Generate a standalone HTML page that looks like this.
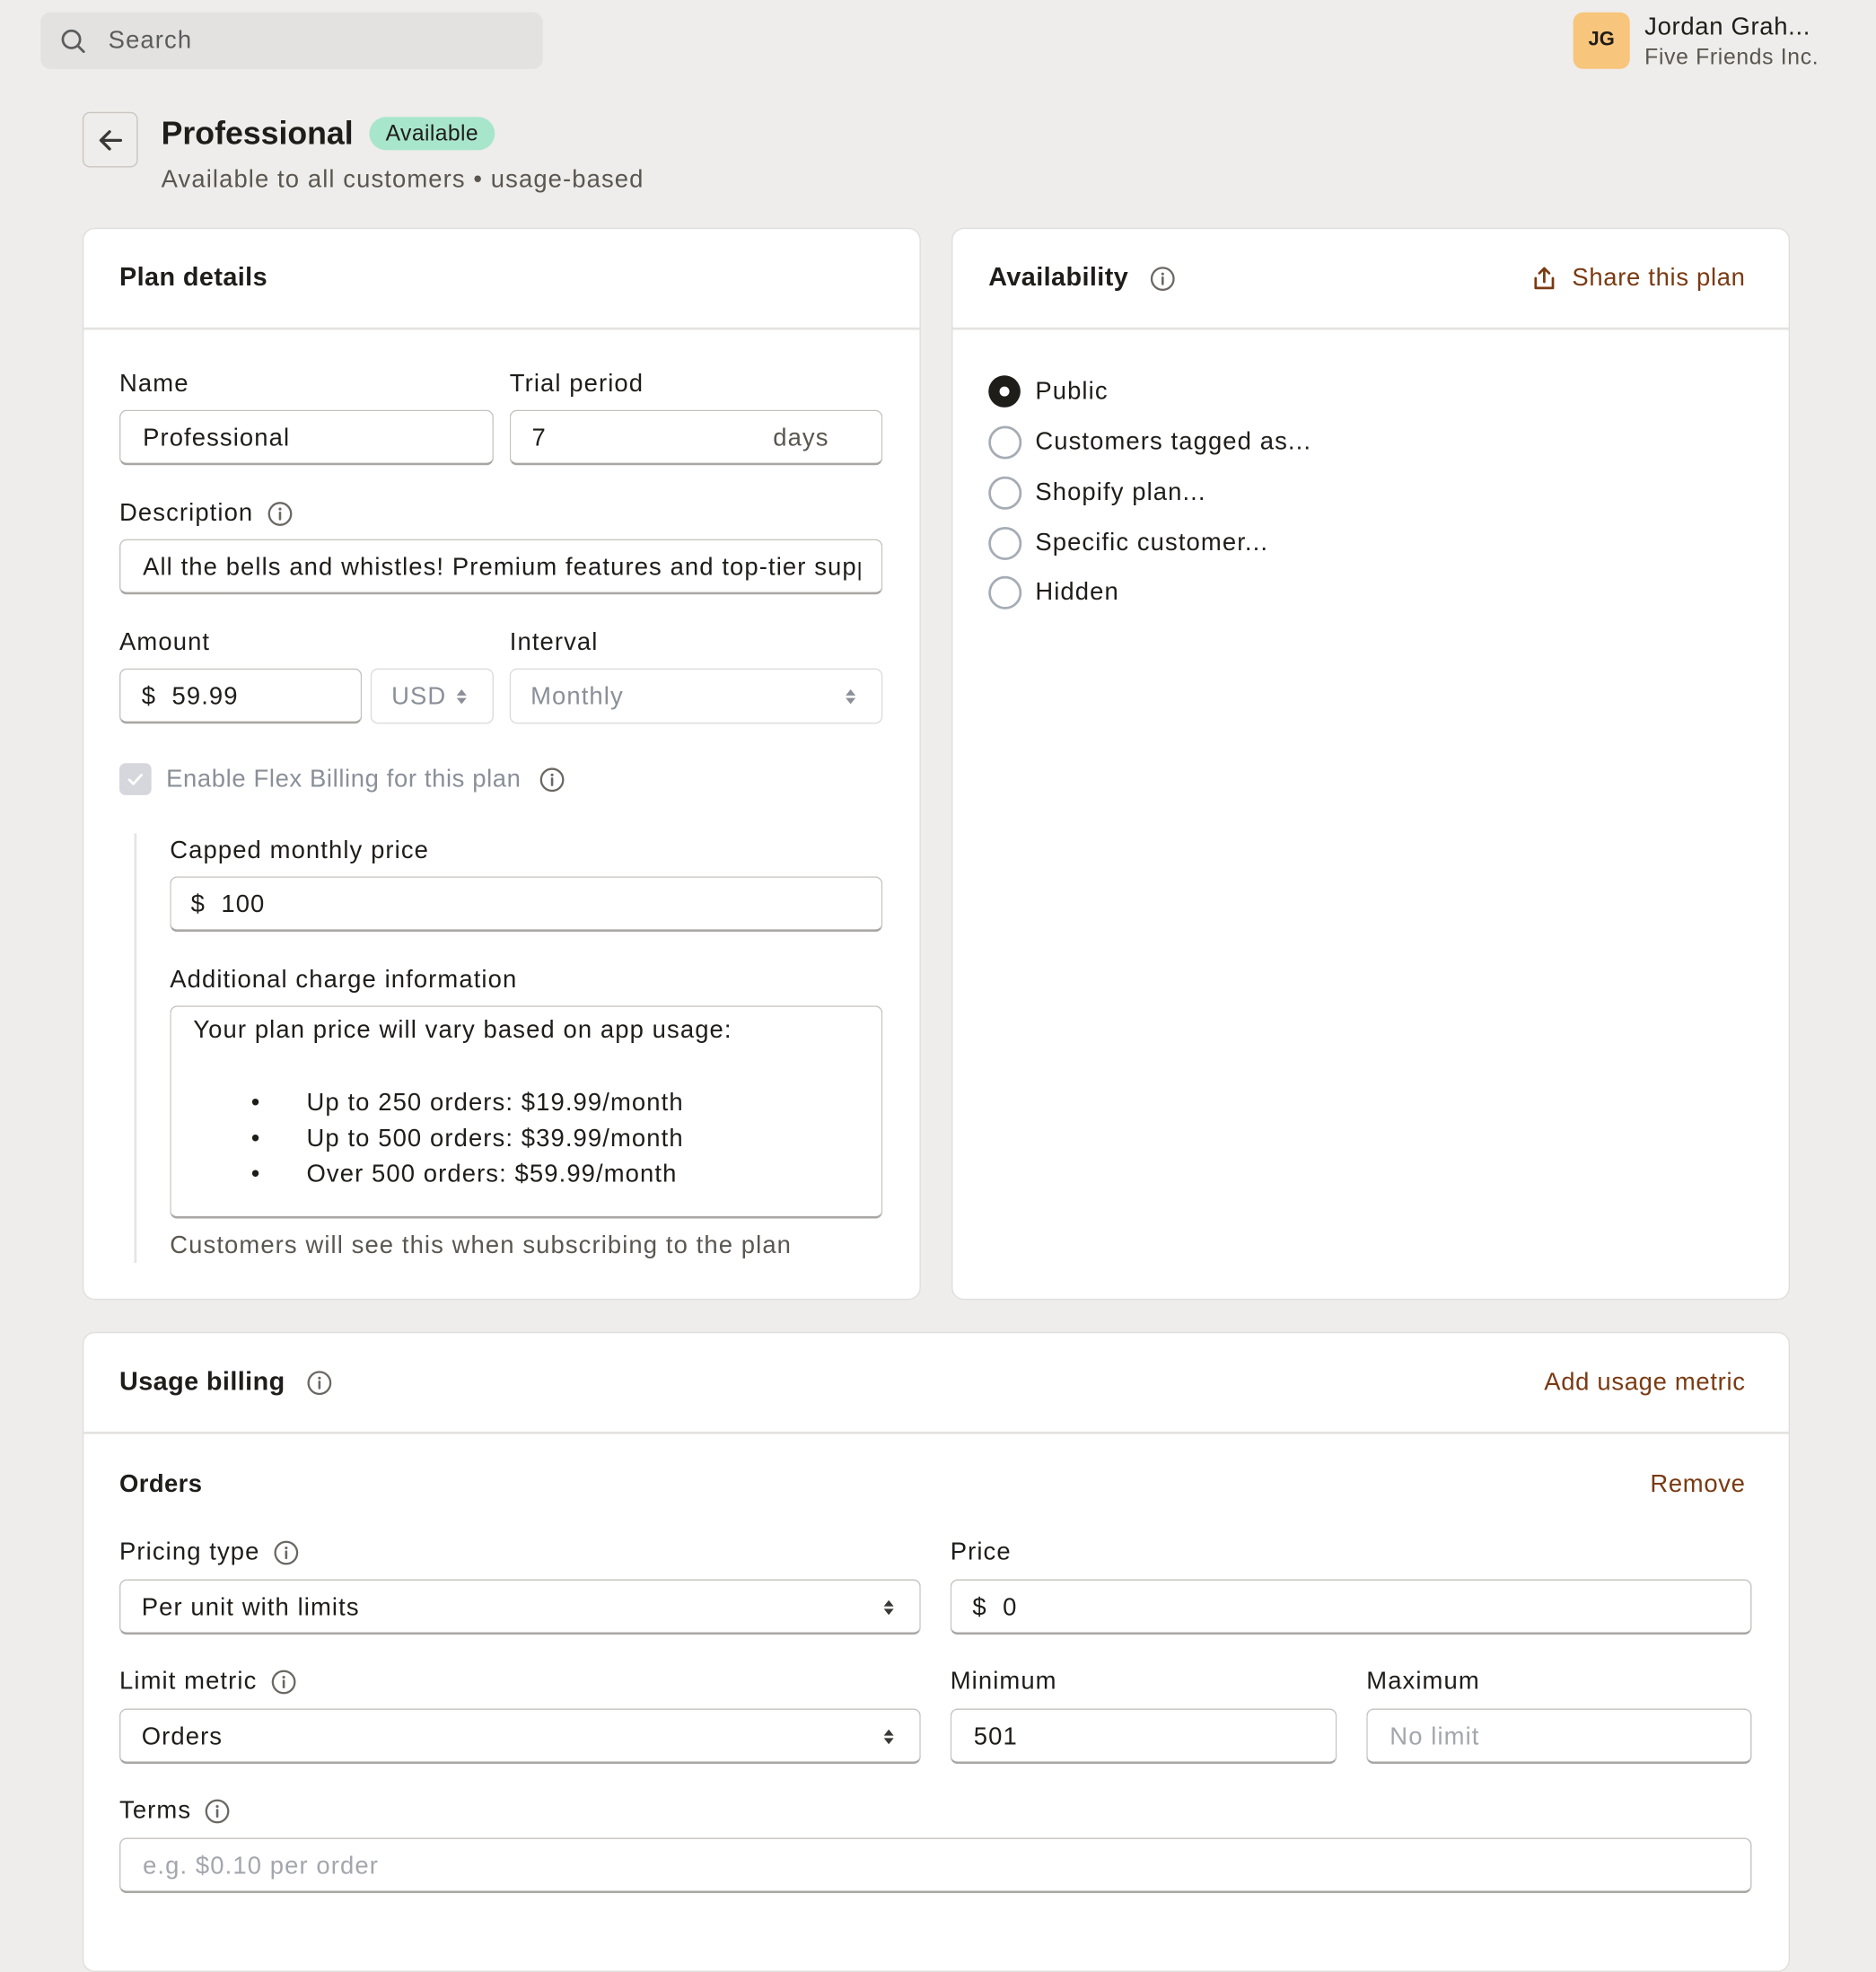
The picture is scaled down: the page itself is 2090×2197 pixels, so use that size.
<!DOCTYPE html>
<html><head><meta charset="utf-8">
<style>
html,body{margin:0;padding:0;background:#eeedeb;width:2090px;height:2150px;overflow:hidden}
#w{position:absolute;left:0;top:0;width:1524px;height:1568px;transform:scale(1.37139);transform-origin:0 0;font-family:"Liberation Sans",sans-serif;color:#1f1d1a;font-size:20px;letter-spacing:0.8px}
.a{position:absolute;white-space:nowrap;line-height:24px}
.b{font-weight:bold;letter-spacing:0.3px}
.card{position:absolute;background:#fff;border:1px solid #e0dedb;border-radius:10px;box-sizing:border-box}
.hr{position:absolute;height:2px;background:#e3e2e0}
.in{position:absolute;box-sizing:border-box;border:1px solid #c4c2be;border-bottom:2px solid #a9a7a3;border-radius:6px;background:#fff}
.dis{border:1px solid #dcdcdc;border-bottom:1px solid #dcdcdc}
.g{color:#8a8f98}
.m{color:#5a5650}
.br{color:#7a3a12;letter-spacing:0.5px}
.rad{position:absolute;width:23px;height:23px;border:2px solid #a6acb5;border-radius:50%}
</style></head><body><div id="w">
<div style="position:absolute;left:33px;top:10px;width:408px;height:46px;background:#e3e2e0;border-radius:8px"></div>
<svg style="position:absolute;left:49px;top:23px" width="22" height="22" viewBox="0 0 22 22"><circle cx="9" cy="9" r="7" fill="none" stroke="#5c5c5c" stroke-width="2"/><path d="M14 14l5 5" stroke="#5c5c5c" stroke-width="2" stroke-linecap="round"/></svg>
<div class="a" style="left:88px;top:21px;color:#5c5c5c">Search</div>
<div style="position:absolute;left:1278px;top:10px;width:46px;height:46px;background:#f7c57b;border-radius:8px;font-size:16px;font-weight:bold;line-height:46px;text-align:center;letter-spacing:0">JG</div>
<div class="a" style="left:1336px;top:10px;letter-spacing:0.5px">Jordan Grah...</div>
<div class="a m" style="left:1336px;top:34px;font-size:18px;letter-spacing:0.5px">Five Friends Inc.</div>
<div style="position:absolute;left:67px;top:91px;width:45px;height:45px;box-sizing:border-box;border:1px solid #c9c5c1;border-radius:6px"></div>
<svg style="position:absolute;left:78px;top:102px" width="24" height="24" viewBox="0 0 24 24"><path d="M20 12H4M11 5l-7 7 7 7" fill="none" stroke="#3a3835" stroke-width="2.4" stroke-linecap="round" stroke-linejoin="round"/></svg>
<div class="a b" style="left:131px;top:94px;font-size:26px;line-height:28px;letter-spacing:0">Professional</div>
<div style="position:absolute;left:300px;top:95px;width:102px;height:27px;background:#a8e6cc;border-radius:14px;font-size:18px;line-height:27px;text-align:center;letter-spacing:0.3px">Available</div>
<div class="a m" style="left:131px;top:134px">Available to all customers • usage-based</div>

<div class="card" style="left:67px;top:185px;width:681px;height:871px"></div>
<div class="hr" style="left:68px;top:266px;width:679px"></div>
<div class="a b" style="left:97px;top:214px;font-size:21px">Plan details</div>
<div class="a" style="left:97px;top:300px">Name</div>
<div class="a" style="left:414px;top:300px">Trial period</div>
<div class="in" style="left:97px;top:333px;width:304px;height:45px"></div>
<div class="a" style="left:116px;top:344px">Professional</div>
<div class="in" style="left:414px;top:333px;width:303px;height:45px"></div>
<div class="a" style="left:432px;top:344px">7</div>
<div class="a m" style="left:628px;top:344px">days</div>
<div class="a" style="left:97px;top:405px">Description</div>
<svg style="position:absolute;left:217px;top:407px" width="21" height="21" viewBox="0 0 20 20"><circle cx="10" cy="10" r="8.5" fill="none" stroke="#6b6864" stroke-width="1.6"/><path d="M10 9v5" stroke="#6b6864" stroke-width="1.8" stroke-linecap="round"/><circle cx="10" cy="6.2" r="1.1" fill="#6b6864"/></svg>
<div class="in" style="left:97px;top:438px;width:620px;height:45px;overflow:hidden"><div class="a" style="left:18px;top:10px;width:583px;overflow:hidden">All the bells and whistles! Premium features and top-tier support</div></div>
<div class="a" style="left:97px;top:510px">Amount</div>
<div class="a" style="left:414px;top:510px">Interval</div>
<div class="in" style="left:97px;top:543px;width:197px;height:45px"></div>
<div class="a" style="left:115px;top:554px">$&nbsp;&nbsp;59.99</div>
<div class="in dis" style="left:301px;top:543px;width:100px;height:45px"></div>
<div class="a g" style="left:318px;top:554px">USD</div>
<svg style="position:absolute;left:369px;top:557px" width="12" height="18" viewBox="0 0 12 18"><path d="M6 3l4 5H2zM6 15l4-5H2z" fill="#8a8f98"/></svg>
<div class="in dis" style="left:414px;top:543px;width:303px;height:45px"></div>
<div class="a g" style="left:431px;top:554px">Monthly</div>
<svg style="position:absolute;left:685px;top:557px" width="12" height="18" viewBox="0 0 12 18"><path d="M6 3l4 5H2zM6 15l4-5H2z" fill="#8a8f98"/></svg>
<div style="position:absolute;left:97px;top:620px;width:26px;height:26px;background:#d5d7dc;border-radius:5px"></div>
<svg style="position:absolute;left:102px;top:625px" width="16" height="16" viewBox="0 0 16 16"><path d="M3 8.5l3.3 3.3L13 4.5" fill="none" stroke="#fff" stroke-width="2" stroke-linecap="round" stroke-linejoin="round"/></svg>
<div class="a g" style="left:135px;top:621px;letter-spacing:0.45px">Enable Flex Billing for this plan</div>
<svg style="position:absolute;left:438px;top:623px" width="21" height="21" viewBox="0 0 20 20"><circle cx="10" cy="10" r="8.5" fill="none" stroke="#6b6864" stroke-width="1.6"/><path d="M10 9v5" stroke="#6b6864" stroke-width="1.8" stroke-linecap="round"/><circle cx="10" cy="6.2" r="1.1" fill="#6b6864"/></svg>
<div style="position:absolute;left:109px;top:677px;width:2px;height:349px;background:#e6e5e3"></div>
<div class="a" style="left:138px;top:679px">Capped monthly price</div>
<div class="in" style="left:138px;top:712px;width:579px;height:45px"></div>
<div class="a" style="left:155px;top:723px">$&nbsp;&nbsp;100</div>
<div class="a" style="left:138px;top:784px">Additional charge information</div>
<div class="in" style="left:138px;top:817px;width:579px;height:173px"></div>
<div class="a" style="left:157px;top:825px">Your plan price will vary based on app usage:</div>
<div class="a" style="left:204px;top:884px">•</div><div class="a" style="left:249px;top:884px">Up to 250 orders: $19.99/month</div>
<div class="a" style="left:204px;top:913px">•</div><div class="a" style="left:249px;top:913px">Up to 500 orders: $39.99/month</div>
<div class="a" style="left:204px;top:942px">•</div><div class="a" style="left:249px;top:942px">Over 500 orders: $59.99/month</div>
<div class="a m" style="left:138px;top:1000px">Customers will see this when subscribing to the plan</div>

<div class="card" style="left:773px;top:185px;width:681px;height:871px"></div>
<div class="hr" style="left:774px;top:266px;width:679px"></div>
<div class="a b" style="left:803px;top:214px;font-size:21px">Availability</div>
<svg style="position:absolute;left:934px;top:216px" width="21" height="21" viewBox="0 0 20 20"><circle cx="10" cy="10" r="8.5" fill="none" stroke="#6b6864" stroke-width="1.6"/><path d="M10 9v5" stroke="#6b6864" stroke-width="1.8" stroke-linecap="round"/><circle cx="10" cy="6.2" r="1.1" fill="#6b6864"/></svg>
<svg style="position:absolute;left:1244px;top:215px" width="21" height="22" viewBox="0 0 20 22"><path d="M10 14V3M6 7l4-4 4 4M3 11v8h14v-8" fill="none" stroke="#7a3a12" stroke-width="2" stroke-linecap="round" stroke-linejoin="round"/></svg>
<div class="a br" style="right:106px;top:214px">Share this plan</div>
<div style="position:absolute;left:803px;top:305px;width:26px;height:26px;border-radius:50%;background:#1f1d1a"></div>
<div style="position:absolute;left:812px;top:314px;width:8px;height:8px;border-radius:50%;background:#fff"></div>
<div class="a" style="left:841px;top:306px">Public</div>
<div class="rad" style="left:803px;top:346px"></div><div class="a" style="left:841px;top:347px">Customers tagged as...</div>
<div class="rad" style="left:803px;top:387px"></div><div class="a" style="left:841px;top:388px">Shopify plan...</div>
<div class="rad" style="left:803px;top:428px"></div><div class="a" style="left:841px;top:429px">Specific customer...</div>
<div class="rad" style="left:803px;top:468px"></div><div class="a" style="left:841px;top:469px">Hidden</div>

<div class="card" style="left:67px;top:1082px;width:1387px;height:520px"></div>
<div class="hr" style="left:68px;top:1163px;width:1385px"></div>
<div class="a b" style="left:97px;top:1111px;font-size:21px">Usage billing</div>
<svg style="position:absolute;left:249px;top:1113px" width="21" height="21" viewBox="0 0 20 20"><circle cx="10" cy="10" r="8.5" fill="none" stroke="#6b6864" stroke-width="1.6"/><path d="M10 9v5" stroke="#6b6864" stroke-width="1.8" stroke-linecap="round"/><circle cx="10" cy="6.2" r="1.1" fill="#6b6864"/></svg>
<div class="a br" style="right:106px;top:1111px">Add usage metric</div>
<div class="a b" style="left:97px;top:1194px">Orders</div>
<div class="a br" style="right:106px;top:1194px">Remove</div>
<div class="a" style="left:97px;top:1249px">Pricing type</div>
<svg style="position:absolute;left:222px;top:1251px" width="21" height="21" viewBox="0 0 20 20"><circle cx="10" cy="10" r="8.5" fill="none" stroke="#6b6864" stroke-width="1.6"/><path d="M10 9v5" stroke="#6b6864" stroke-width="1.8" stroke-linecap="round"/><circle cx="10" cy="6.2" r="1.1" fill="#6b6864"/></svg>
<div class="a" style="left:772px;top:1249px">Price</div>
<div class="in" style="left:97px;top:1283px;width:651px;height:45px"></div>
<div class="a" style="left:115px;top:1294px">Per unit with limits</div>
<svg style="position:absolute;left:716px;top:1297px" width="12" height="18" viewBox="0 0 12 18"><path d="M6 3l4 5H2zM6 15l4-5H2z" fill="#3a3835"/></svg>
<div class="in" style="left:772px;top:1283px;width:651px;height:45px"></div>
<div class="a" style="left:790px;top:1294px">$&nbsp;&nbsp;0</div>
<div class="a" style="left:97px;top:1354px">Limit metric</div>
<svg style="position:absolute;left:220px;top:1356px" width="21" height="21" viewBox="0 0 20 20"><circle cx="10" cy="10" r="8.5" fill="none" stroke="#6b6864" stroke-width="1.6"/><path d="M10 9v5" stroke="#6b6864" stroke-width="1.8" stroke-linecap="round"/><circle cx="10" cy="6.2" r="1.1" fill="#6b6864"/></svg>
<div class="a" style="left:772px;top:1354px">Minimum</div>
<div class="a" style="left:1110px;top:1354px">Maximum</div>
<div class="in" style="left:97px;top:1388px;width:651px;height:45px"></div>
<div class="a" style="left:115px;top:1399px">Orders</div>
<svg style="position:absolute;left:716px;top:1402px" width="12" height="18" viewBox="0 0 12 18"><path d="M6 3l4 5H2zM6 15l4-5H2z" fill="#3a3835"/></svg>
<div class="in" style="left:772px;top:1388px;width:314px;height:45px"></div>
<div class="a" style="left:791px;top:1399px">501</div>
<div class="in" style="left:1110px;top:1388px;width:313px;height:45px"></div>
<div class="a g" style="left:1129px;top:1399px;color:#a3a6ad">No limit</div>
<div class="a" style="left:97px;top:1459px">Terms</div>
<svg style="position:absolute;left:166px;top:1461px" width="21" height="21" viewBox="0 0 20 20"><circle cx="10" cy="10" r="8.5" fill="none" stroke="#6b6864" stroke-width="1.6"/><path d="M10 9v5" stroke="#6b6864" stroke-width="1.8" stroke-linecap="round"/><circle cx="10" cy="6.2" r="1.1" fill="#6b6864"/></svg>
<div class="in" style="left:97px;top:1493px;width:1326px;height:45px"></div>
<div class="a" style="left:116px;top:1504px;color:#a3a6ad">e.g. $0.10 per order</div>
</div></body></html>
